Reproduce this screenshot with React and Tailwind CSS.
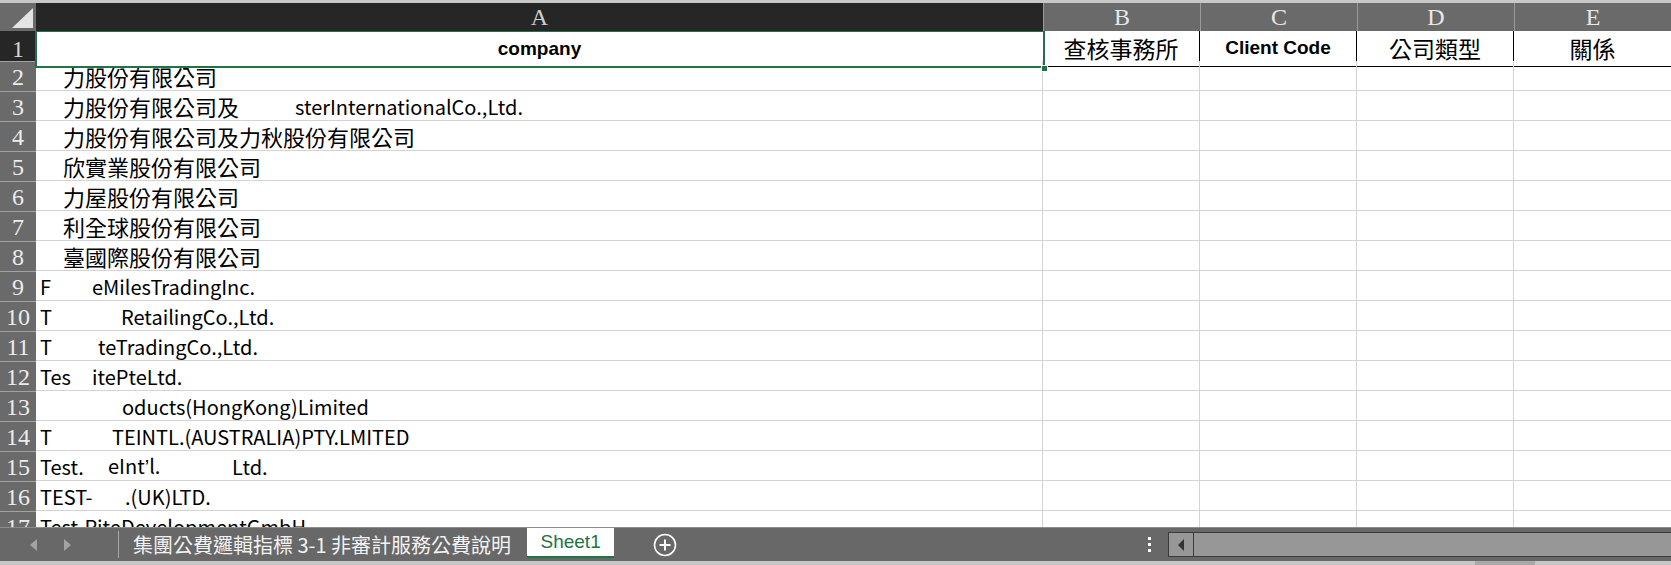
import React from "react";

const COLS = "grid grid-cols-[36px_1007px_157px_157px_157px_157px]";
const DATA_FONT = "font-['Noto_Sans_CJK_TC','Noto_Sans',sans-serif]";
const SERIF = "font-['Liberation_Serif','Noto_Sans_CJK_TC',serif]";

// cjk segments are set a touch larger than latin, as in the sheet
const rows = [
    { n: 2, pad: "pl-[27px]", segs: [{ cjk: true, t: "力股份有限公司" }] },
    { n: 3, pad: "pl-[27px]", segs: [{ cjk: true, w: "w-[232px]", t: "力股份有限公司及" }, { t: "sterInternationalCo.,Ltd." }] },
    { n: 4, pad: "pl-[27px]", segs: [{ cjk: true, t: "力股份有限公司及力秋股份有限公司" }] },
    { n: 5, pad: "pl-[27px]", segs: [{ cjk: true, t: "欣實業股份有限公司" }] },
    { n: 6, pad: "pl-[27px]", segs: [{ cjk: true, t: "力屋股份有限公司" }] },
    { n: 7, pad: "pl-[27px]", segs: [{ cjk: true, t: "利全球股份有限公司" }] },
    { n: 8, pad: "pl-[27px]", segs: [{ cjk: true, t: "臺國際股份有限公司" }] },
    { n: 9, pad: "pl-[4px]", segs: [{ w: "w-[52px]", t: "F" }, { t: "eMilesTradingInc." }] },
    { n: 10, pad: "pl-[4px]", segs: [{ w: "w-[81px]", t: "T" }, { t: "RetailingCo.,Ltd." }] },
    { n: 11, pad: "pl-[4px]", segs: [{ w: "w-[58px]", t: "T" }, { t: "teTradingCo.,Ltd." }] },
    { n: 12, pad: "pl-[4px]", segs: [{ w: "w-[52px]", t: "Tes" }, { t: "itePteLtd." }] },
    { n: 13, pad: "pl-[86px]", segs: [{ t: "oducts(HongKong)Limited" }] },
    { n: 14, pad: "pl-[4px]", segs: [{ w: "w-[72px]", t: "T" }, { t: "TEINTL.(AUSTRALIA)PTY.LMITED" }] },
    {
        n: 15,
        pad: "pl-[4px]",
        segs: [
            { w: "w-[68px]", t: "Test." },
            {
                w: "w-[124px]",
                t: (
                    <>
                        eInt<span className="font-['Liberation_Sans',sans-serif]">’</span>l.
                    </>
                ),
            },
            { t: "Ltd." },
        ],
    },
    { n: 16, pad: "pl-[4px]", segs: [{ w: "w-[85px]", t: "TEST-" }, { t: ".(UK)LTD." }] },
    { n: 17, pad: "pl-[4px]", segs: [{ t: "Test-RiteDevelopmentGmbH" }] },
];

const ColHead = ({ label, dark }) => (
    <div
        className={`flex items-center justify-center ${SERIF} text-[24px] leading-none ${
            dark ? "bg-[#262626] text-[#cfcfcf]" : "bg-[#6a6a6a] text-[#e8e8e8] border-l border-[#9a9a9a]"
        }`}
    >
        {label}
    </div>
);

const EmptyCells = () => (
    <>
        <div className="border-r border-b border-[#d4d4d4]" />
        <div className="border-r border-b border-[#d4d4d4]" />
        <div className="border-r border-b border-[#d4d4d4]" />
        <div className="border-b border-[#d4d4d4]" />
    </>
);

export default function App() {
    return (
        <div className="w-[1671px] h-[565px] overflow-hidden bg-white flex flex-col">
            <div className="h-[3px] bg-[#c8c8c8]" />

            {/* column headers */}
            <div className={`${COLS} h-[28px]`}>
                <div className="bg-[#6a6a6a] flex items-end justify-end pr-[3px] pb-[3px]">
                    <svg width="21" height="20" viewBox="0 0 21 20">
                        <polygon points="21,0 21,20 0,20" fill="#e4e4e4" />
                    </svg>
                </div>
                <ColHead label="A" dark />
                <ColHead label="B" />
                <ColHead label="C" />
                <ColHead label="D" />
                <ColHead label="E" />
            </div>

            <div className="flex-1 overflow-hidden">
                {/* row 1 */}
                <div className={`${COLS} h-[30px]`}>
                    <div className={`bg-[#262626] text-[#d8d8d8] flex items-center justify-center ${SERIF} text-[24px] leading-none`}>
                        1
                    </div>
                    <div className="relative flex items-center justify-center font-['Liberation_Sans',sans-serif] font-bold text-[19px] text-black">
                        company
                        <span className="absolute -left-px -top-px -right-[2px] -bottom-px border-2 border-[#217346]" />
                        <span className="absolute -right-[5px] -bottom-[5px] w-[7px] h-[7px] bg-[#217346] border border-white" />
                    </div>
                    <div className="flex items-center justify-center border-r border-b border-black font-['Noto_Sans_CJK_TC',serif] text-[23px] text-black">
                        查核事務所
                    </div>
                    <div className="flex items-center justify-center border-r border-b border-black font-['Liberation_Sans',sans-serif] font-bold text-[19px] text-black">
                        Client Code
                    </div>
                    <div className="flex items-center justify-center border-r border-b border-black font-['Noto_Sans_CJK_TC',serif] text-[23px] text-black">
                        公司類型
                    </div>
                    <div className="flex items-center justify-center border-b border-black font-['Noto_Sans_CJK_TC',serif] text-[23px] text-black">
                        關係
                    </div>
                </div>

                {rows.map((r) => (
                    <div key={r.n} className={`${COLS} h-[30px]`}>
                        <div className={`bg-[#6a6a6a] text-[#ececec] border-t border-[#a2a2a2] flex items-center justify-center ${SERIF} text-[24px] leading-none`}>
                            {r.n}
                        </div>
                        <div
                            className={`flex items-center whitespace-nowrap overflow-hidden border-r border-b border-[#d4d4d4] ${r.pad} ${DATA_FONT} text-black pt-[2px]`}
                        >
                            {r.segs.map((s, i) => (
                                <span key={i} className={`${s.w || ""} ${s.cjk ? "text-[22px]" : "text-[20px]"} shrink-0`}>
                                    {s.t}
                                </span>
                            ))}
                        </div>
                        <EmptyCells />
                    </div>
                ))}
            </div>

            {/* sheet tabs + scrollbar */}
            <div className="h-[34px] bg-[#686868] border-t border-[#8c8c8c] flex items-stretch">
                <div className="w-[118px] flex items-center">
                    <svg width="8" height="12" viewBox="0 0 8 12" className="ml-[30px]">
                        <polygon points="7,0 7,12 0,6" fill="#a3a3a3" />
                    </svg>
                    <svg width="8" height="12" viewBox="0 0 8 12" className="ml-[25px]">
                        <polygon points="1,0 1,12 8,6" fill="#a3a3a3" />
                    </svg>
                </div>
                <div className="w-px my-[3px] bg-[#a8a8a8]" />
                <div className={`pl-[14px] pr-[16px] flex items-center ${DATA_FONT} text-[20px] text-[#f2f2f2] whitespace-nowrap`}>
                    集團公費邏輯指標 3-1 非審計服務公費說明
                </div>
                <div className="w-[87px] mb-[3px] bg-white border-b-2 border-[#217346] flex items-center justify-center font-['Liberation_Sans',sans-serif] text-[19px] text-[#217346]">
                    Sheet1
                </div>
                <div className="w-[102px] flex items-center justify-center">
                    <svg width="24" height="24" viewBox="0 0 24 24" fill="none" stroke="#ffffff" strokeWidth="1.6">
                        <circle cx="12" cy="12" r="10.5" />
                        <path d="M12 6.5v11M6.5 12h11" strokeWidth="2" />
                    </svg>
                </div>
                <div className="w-[452px] flex items-center justify-end pr-[17px]">
                    <div className="flex flex-col gap-[3px]">
                        <span className="w-[3px] h-[3px] bg-white" />
                        <span className="w-[3px] h-[3px] bg-white" />
                        <span className="w-[3px] h-[3px] bg-white" />
                    </div>
                </div>
                <div className="flex-1 my-[4px] flex border-y border-l border-[#3a3a3a] bg-[#979797]">
                    <div className="w-[25px] border-r border-[#3a3a3a] flex items-center justify-center">
                        <svg width="6" height="12" viewBox="0 0 6 12">
                            <polygon points="6,0 6,12 0,6" fill="#333333" />
                        </svg>
                    </div>
                    <div className="flex-1" />
                </div>
            </div>
            <div className="h-[4px] bg-[#c6c6c6] flex">
                <div className="ml-[1475px] w-[60px] bg-[#a9a9a9]" />
            </div>
        </div>
    );
}
